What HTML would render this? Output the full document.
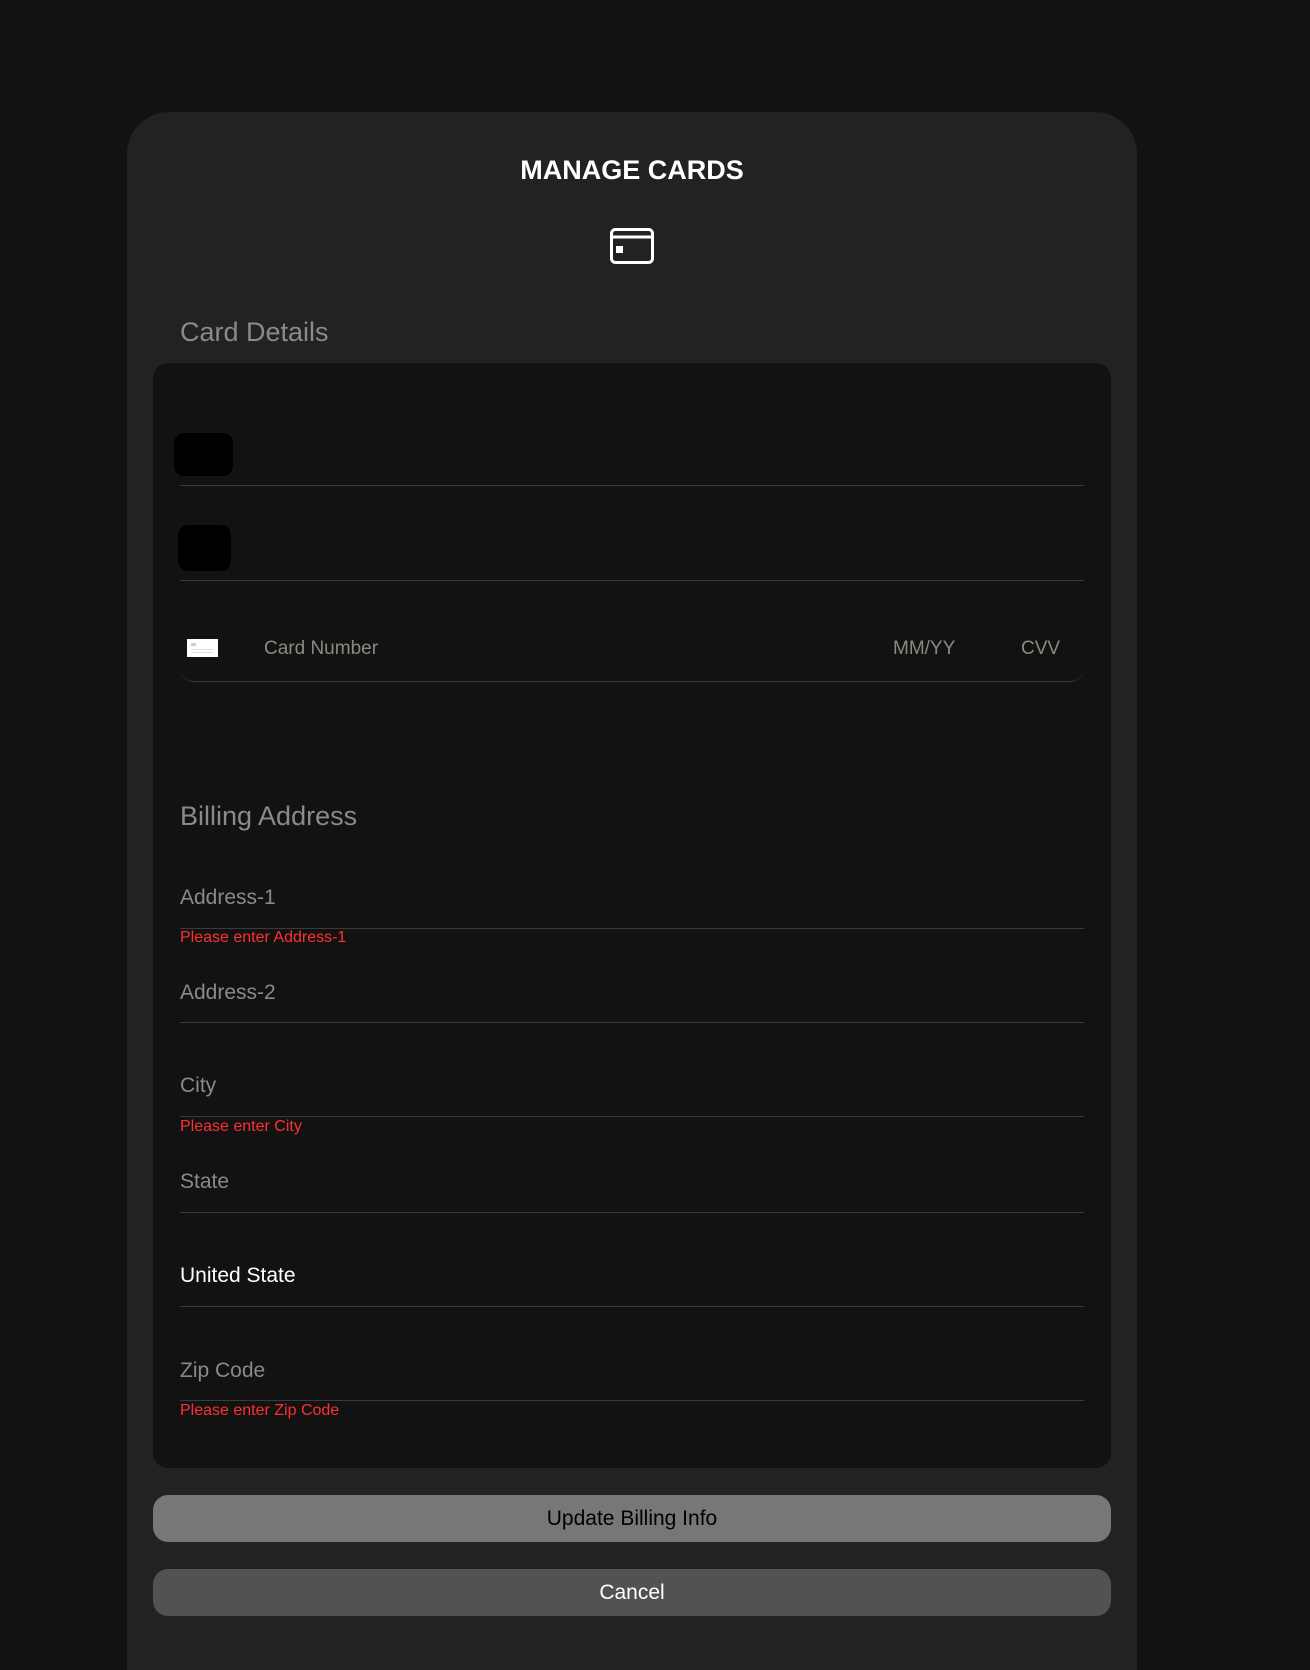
<!DOCTYPE html>
<html><head><meta charset="utf-8"><style>
*{margin:0;padding:0;box-sizing:border-box}
html{overflow:hidden;height:1670px}
body{width:1310px;height:1670px;background:#121212;font-family:"Liberation Sans",Arial,sans-serif;position:relative;overflow:hidden}
.panel{position:absolute;left:127px;top:112px;width:1010px;height:1600px;background:#222;border-radius:42px}
.a{position:absolute}
.title{left:127px;width:1010px;text-align:center;top:155px;font-size:27px;font-weight:bold;color:#fff}
.h{left:180px;font-size:27px;color:#8a8a8a}
.box{left:153px;top:363px;width:958px;height:1105px;background:#121212;border-radius:15px}
.line{left:180px;width:904px;height:1px;background:#3a3a3a}
.lbl{left:180px;font-size:21px;color:#8a8a8a;line-height:24px}
.err{left:180px;font-size:16px;color:#ff3030;line-height:18px}
.blob{background:#000;border-radius:10px}
.cn{font-family:"Liberation Sans",sans-serif;font-size:19px;color:#8a8a80;line-height:22px}
.btn{left:153px;width:958px;border-radius:15px;text-align:center;font-size:21px}
</style></head><body>
<div class="panel"></div>
<div class="a title">MANAGE CARDS</div>
<svg class="a" style="left:608px;top:226px" width="48" height="40" viewBox="0 0 48 40">
<rect x="3.5" y="3.5" width="41" height="33" rx="4" fill="none" stroke="#fff" stroke-width="3"/>
<line x1="3.5" y1="11" x2="44.5" y2="11" stroke="#fff" stroke-width="3"/>
<rect x="8" y="20" width="7" height="7" fill="#fff"/>
</svg>
<div class="a h" style="top:317px">Card Details</div>
<div class="a box"></div>
<div class="a blob" style="left:174px;top:433px;width:59px;height:43px"></div>
<div class="a line" style="top:485px"></div>
<div class="a blob" style="left:178px;top:525px;width:53px;height:46px"></div>
<div class="a line" style="top:580px"></div>
<div class="a" style="left:180px;top:600px;width:904px;height:82px;border-bottom:1px solid #3a3a3a;border-radius:0 0 14px 14px"></div>
<div class="a" style="left:187px;top:639px;width:31px;height:18px;background:#fff">
<div class="a" style="left:4px;top:4px;width:5px;height:3px;background:#ccc"></div>
<div class="a" style="left:4px;top:10px;width:22px;height:1px;background:#ddd"></div>
<div class="a" style="left:4px;top:13px;width:22px;height:1px;background:#ddd"></div>
</div>
<div class="a cn" style="left:264px;top:638px">Card Number</div>
<div class="a cn" style="left:893px;top:638px">MM/YY</div>
<div class="a cn" style="left:1021px;top:638px">CVV</div>
<div class="a h" style="top:801px">Billing Address</div>
<div class="a lbl" style="top:886px">Address-1</div>
<div class="a line" style="top:928px"></div>
<div class="a err" style="top:929px">Please enter Address-1</div>
<div class="a lbl" style="top:981px">Address-2</div>
<div class="a line" style="top:1022px"></div>
<div class="a lbl" style="top:1074px">City</div>
<div class="a line" style="top:1116px"></div>
<div class="a err" style="top:1118px">Please enter City</div>
<div class="a lbl" style="top:1170px">State</div>
<div class="a line" style="top:1212px"></div>
<div class="a lbl" style="top:1264px;color:#fff">United State</div>
<div class="a line" style="top:1306px"></div>
<div class="a lbl" style="top:1359px">Zip Code</div>
<div class="a line" style="top:1400px"></div>
<div class="a err" style="top:1402px">Please enter Zip Code</div>
<div class="a btn" style="top:1495px;height:47px;line-height:47px;background:#777;color:#000">Update Billing Info</div>
<div class="a btn" style="top:1569px;height:47px;line-height:47px;background:#525252;color:#fff">Cancel</div>
</body></html>
